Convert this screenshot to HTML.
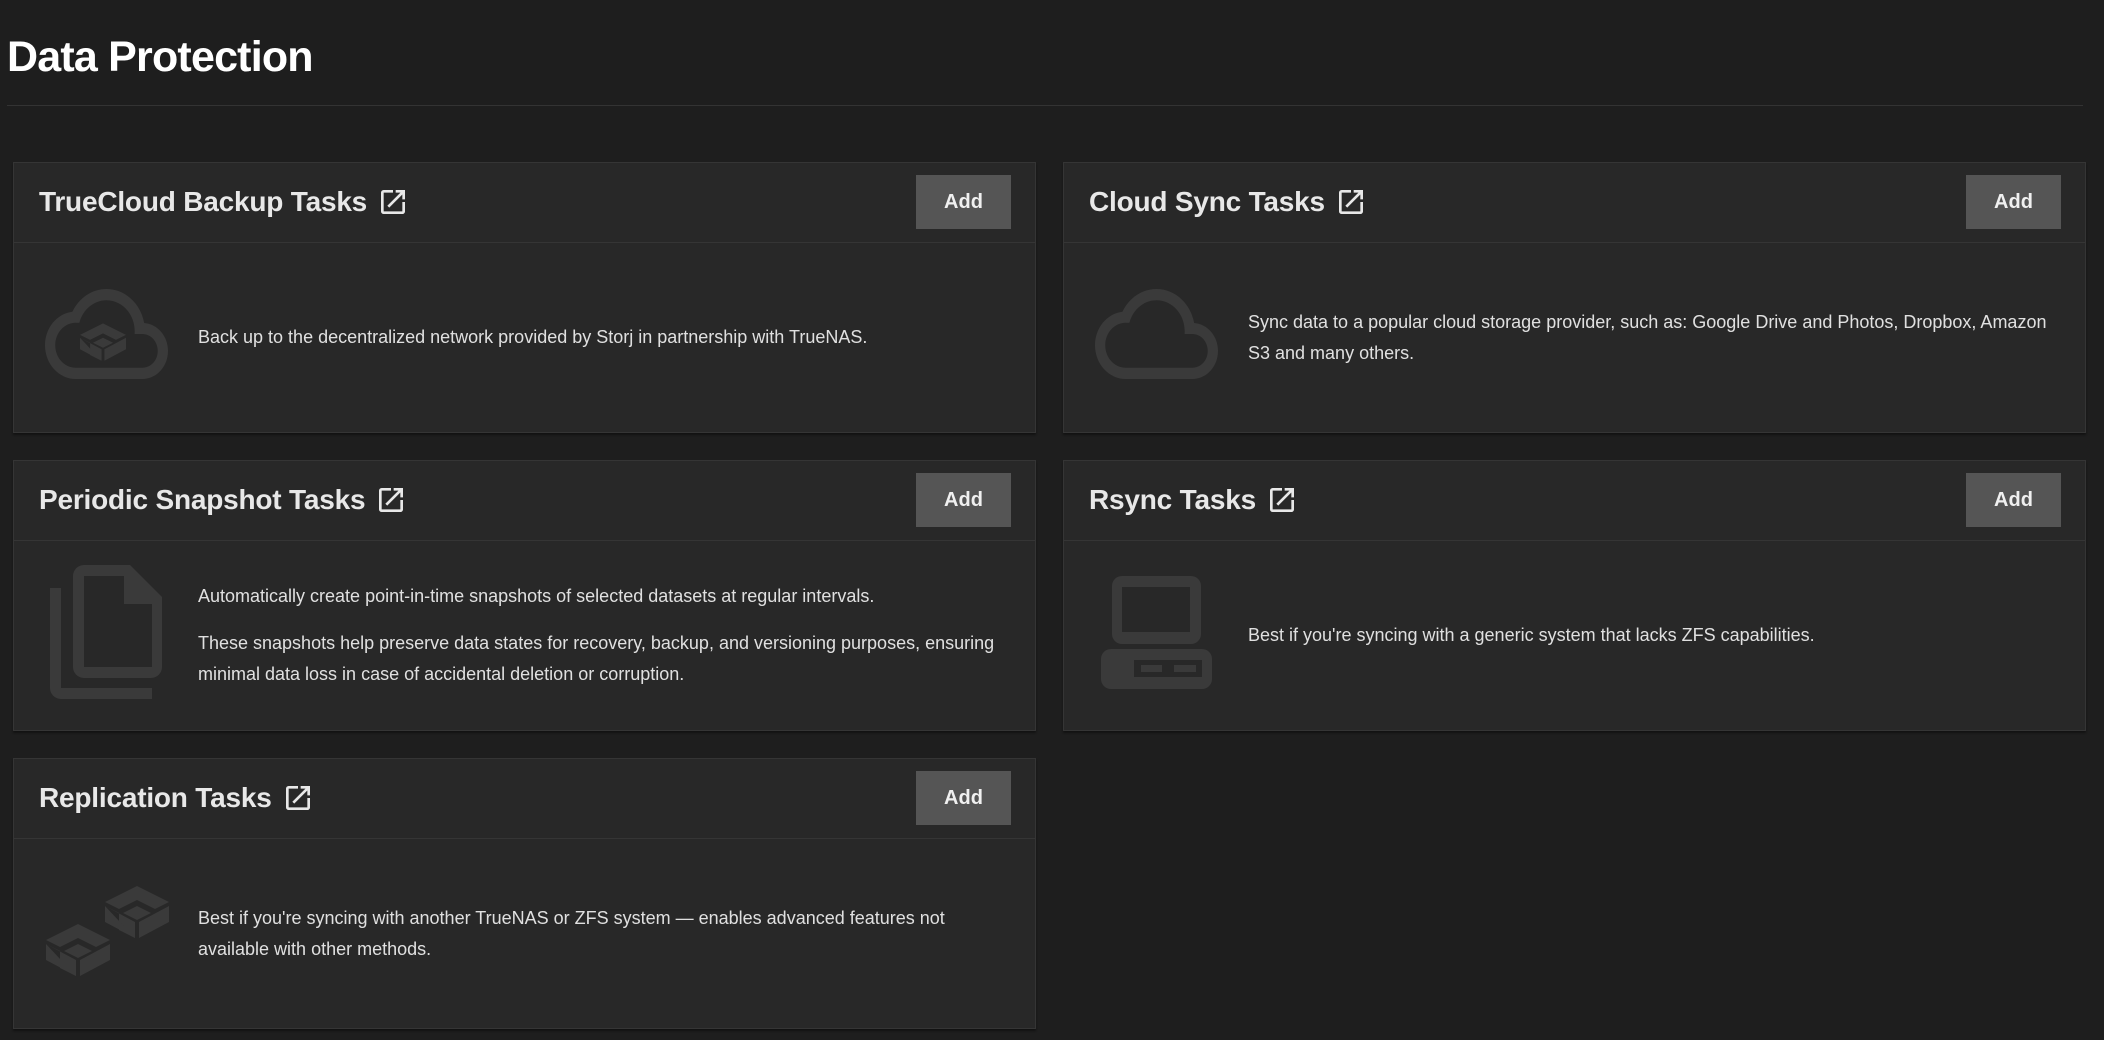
<!DOCTYPE html>
<html><head><meta charset="utf-8"><style>
*{box-sizing:border-box;margin:0;padding:0}
body{width:2104px;height:1040px;background:#1e1e1e;font-family:"Liberation Sans",sans-serif;color:#e0e0e0;position:relative;overflow:hidden}
h1{position:absolute;left:7px;top:33px;font-size:43px;font-weight:bold;color:#fff;letter-spacing:-0.8px}
.hr{position:absolute;left:7px;top:105px;width:2076px;height:1px;background:#333}
.card{position:absolute;width:1023px;height:271px;background:#282828;border:1px solid #353535;box-shadow:0 2px 2px rgba(0,0,0,.4)}
.hd{position:absolute;left:0;top:0;right:0;height:80px;border-bottom:1px solid #353535}
.tt{position:absolute;left:25px;top:23px;font-size:28px;font-weight:bold;color:#e8e8e8;white-space:nowrap;display:flex;align-items:center;letter-spacing:-0.2px}
.tt svg{margin-left:10px}
.btn{position:absolute;right:24px;top:12px;width:95px;height:54px;background:#555;color:#f0f0f0;font-weight:bold;font-size:20px;display:flex;align-items:center;justify-content:center}
.bd{position:absolute;left:0;top:80px;right:0;bottom:0}
.tx{position:absolute;left:184px;top:0;bottom:0;width:820px;display:flex;flex-direction:column;justify-content:center;font-size:18px;line-height:31px}
.tx p+p{margin-top:16px}
.ic{position:absolute;left:0;top:0}
</style></head><body>
<h1>Data Protection</h1>
<div class="hr"></div>

<svg width="0" height="0" style="position:absolute"><defs>
<symbol id="ext" viewBox="0 0 24 24"><path fill="#e8e8e8" d="M19 19H5V5h7V3H5a2 2 0 0 0-2 2v14a2 2 0 0 0 2 2h14c1.1 0 2-.9 2-2v-7h-2v7zM14 3v2h3.59l-9.83 9.83 1.41 1.41L19 6.41V10h2V3h-7z"/></symbol>
<symbol id="box" viewBox="0 0 64 52"><g fill="#3a3a3a"><polygon points="32,0 64,16 50,23 32,14 14,23 0,16"/><polygon points="0,20 14,27 14,44 30,52 30,36 0,20"/><polygon points="0,20 0,36 30,52"/><polygon points="64,20 34,36 34,52 64,36"/><polygon points="18,27 32,20 46,27 32,34"/></g></symbol>
</defs></svg>

<div class="card" style="left:13px;top:162px">
 <div class="hd"><div class="tt">TrueCloud Backup Tasks<svg width="32" height="32"><use href="#ext"/></svg></div><div class="btn">Add</div></div>
 <div class="bd">
  <svg class="ic" width="180" height="190"><svg x="31" y="46" width="123" height="90" viewBox="0 4 24 16" preserveAspectRatio="none"><path fill="#3a3a3a" d="M19.35 10.04C18.67 6.59 15.64 4 12 4 9.11 4 6.6 5.64 5.35 8.04 2.34 8.36 0 10.91 0 14c0 3.31 2.69 6 6 6h13c2.760 0 5-2.24 5-5 0-2.64-2.05-4.78-4.65-4.96zM19 18H6c-2.21 0-4-1.790-4-4s1.79-4 4-4h.71C7.37 7.69 9.48 6 12 6c3.04 0 5.5 2.46 5.5 5.5v.5H19c1.66 0 3 1.34 3 3s-1.34 3-3 3z"/></svg><svg x="66" y="80" width="46" height="38" viewBox="0 0 64 52"><use href="#box"/></svg></svg>
  <div class="tx"><p>Back up to the decentralized network provided by Storj in partnership with TrueNAS.</p></div>
 </div>
</div>

<div class="card" style="left:1063px;top:162px">
 <div class="hd"><div class="tt">Cloud Sync Tasks<svg width="32" height="32"><use href="#ext"/></svg></div><div class="btn">Add</div></div>
 <div class="bd">
  <svg class="ic" width="180" height="190"><svg x="31" y="46" width="123" height="90" viewBox="0 4 24 16" preserveAspectRatio="none"><path fill="#3a3a3a" d="M19.35 10.04C18.67 6.59 15.64 4 12 4 9.11 4 6.6 5.64 5.35 8.04 2.34 8.36 0 10.91 0 14c0 3.31 2.69 6 6 6h13c2.76 0 5-2.24 5-5 0-2.64-2.05-4.78-4.65-4.96zM19 18H6c-2.21 0-4-1.79-4-4s1.79-4 4-4h.71C7.37 7.69 9.48 6 12 6c3.04 0 5.5 2.46 5.5 5.5v.5H19c1.66 0 3 1.34 3 3s-1.34 3-3 3z"/></svg></svg>
  <div class="tx"><p>Sync data to a popular cloud storage provider, such as: Google Drive and Photos, Dropbox, Amazon S3 and many others.</p></div>
 </div>
</div>

<div class="card" style="left:13px;top:460px">
 <div class="hd"><div class="tt">Periodic Snapshot Tasks<svg width="32" height="32"><use href="#ext"/></svg></div><div class="btn">Add</div></div>
 <div class="bd">
  <svg class="ic" width="180" height="190"><path fill="#3a3a3a" d="M36 47h11v100h91v11H47a11 11 0 0 1-11-11z"/><path fill="#3a3a3a" fill-rule="evenodd" d="M70 24h46l32 32v70a11 11 0 0 1-11 11H70a11 11 0 0 1-11-11V35a11 11 0 0 1 11-11zM70 35v91h68V63h-28V35z"/></svg>
  <div class="tx"><p>Automatically create point-in-time snapshots of selected datasets at regular intervals.</p><p>These snapshots help preserve data states for recovery, backup, and versioning purposes, ensuring minimal data loss in case of accidental deletion or corruption.</p></div>
 </div>
</div>

<div class="card" style="left:1063px;top:460px">
 <div class="hd"><div class="tt">Rsync Tasks<svg width="32" height="32"><use href="#ext"/></svg></div><div class="btn">Add</div></div>
 <div class="bd">
  <svg class="ic" width="180" height="190"><path fill="#3a3a3a" fill-rule="evenodd" d="M58 35h69a10 10 0 0 1 10 10v48a10 10 0 0 1-10 10H58a10 10 0 0 1-10-10V45a10 10 0 0 1 10-10zM58 46v45h68V46z"/><path fill="#3a3a3a" fill-rule="evenodd" d="M47 108h91a10 10 0 0 1 10 10v20a10 10 0 0 1-10 10H47a10 10 0 0 1-10-10v-20a10 10 0 0 1 10-10zM70 119v17h68v-17zM77 124h21v7H77zM110 124h22v7h-22z"/></svg>
  <div class="tx"><p>Best if you're syncing with a generic system that lacks ZFS capabilities.</p></div>
 </div>
</div>

<div class="card" style="left:13px;top:758px">
 <div class="hd"><div class="tt">Replication Tasks<svg width="32" height="32"><use href="#ext"/></svg></div><div class="btn">Add</div></div>
 <div class="bd">
  <svg class="ic" width="180" height="190"><svg x="91" y="47" width="64" height="52" viewBox="0 0 64 52"><use href="#box"/></svg><svg x="32" y="85" width="64" height="52" viewBox="0 0 64 52"><use href="#box"/></svg></svg>
  <div class="tx"><p>Best if you're syncing with another TrueNAS or ZFS system — enables advanced features not available with other methods.</p></div>
 </div>
</div>
</body></html>
